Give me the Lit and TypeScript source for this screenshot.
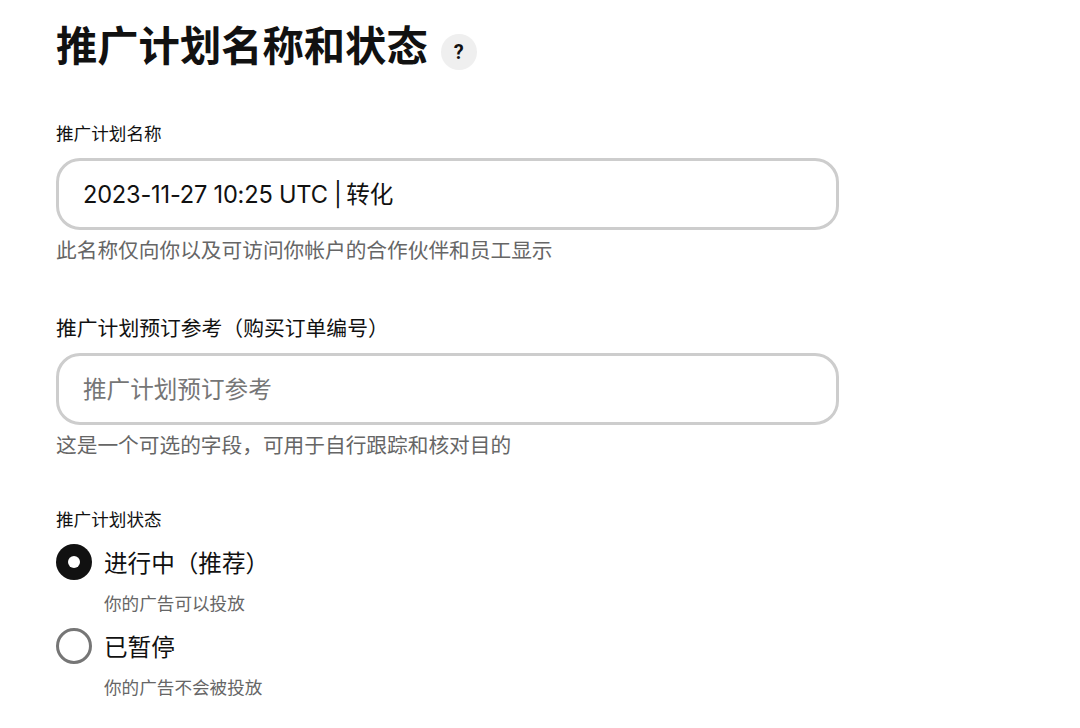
import { LitElement, html, css } from "lit";
import { customElement } from "lit/decorators.js";

@customElement("app-root")
export class AppRoot extends LitElement {
  static styles = css`
    :host { display: block; width: 1080px; height: 728px; overflow: hidden; background: #fff; color: #111;
      font-family: "Roboto", "Noto Sans CJK SC", sans-serif; }
    .page { display: flex; flex-direction: column; padding: 22px 0 0 56px; width: 783px; }
    .head { display: flex; align-items: center; gap: 13px; height: 50px; margin-bottom: 50px; }
    h1 { margin: 0; font-size: 41.3px; line-height: 50px; font-weight: 700; }
    .help { width: 36px; height: 36px; border-radius: 50%; background: #efefef; display: flex; align-items: center; justify-content: center; font-size: 20px; font-weight: 700; margin-top: 9px; }
    .label { font-size: 17.6px; line-height: 24px; height: 24px; }
    .label.big { font-size: 20.8px; }
    .input { box-sizing: border-box; height: 72px; border: 3px solid #cdcdcd; border-radius: 24px; display: flex; align-items: center; padding: 0 24px 3px; font-size: 23.6px; margin-top: 12px; }
    .latin { font-family: "Inter", "Noto Sans CJK SC", sans-serif; letter-spacing: -0.2px; white-space: pre; }
    .cjk { letter-spacing: 0; margin-left: -2px; }
    .ph { color: #767676; }
    .hint { font-size: 20.7px; line-height: 28px; color: #666; margin-top: 7px; }
    .f2 { margin-top: 52px; }
    .f3 { margin-top: 48px; }
    .radio { display: flex; align-items: center; gap: 12px; height: 36px; font-size: 23.6px; margin-top: 12px; }
    .dot { box-sizing: border-box; width: 36px; height: 36px; border-radius: 50%; flex: none; }
    .on { background: #111; display: flex; align-items: center; justify-content: center; }
    .on::after { content: ""; width: 12px; height: 12px; border-radius: 50%; background: #fff; }
    .off { border: 3px solid #767676; }
    .sub { font-size: 17.6px; line-height: 24px; color: #666; margin: 12px 0 0 48px; }
  `;
  render() {
    return html`<div class="page">
      <div class="head"><h1>推广计划名称和状态</h1><div class="help">?</div></div>
      <div class="label">推广计划名称</div>
      <div class="input"><span class="latin">2023-11-27 10:25 UTC | <span class="cjk">转化</span></span></div>
      <div class="hint">此名称仅向你以及可访问你帐户的合作伙伴和员工显示</div>
      <div class="label big f2">推广计划预订参考（购买订单编号）</div>
      <div class="input ph">推广计划预订参考</div>
      <div class="hint">这是一个可选的字段，可用于自行跟踪和核对目的</div>
      <div class="label f3">推广计划状态</div>
      <div class="radio"><span class="dot on"></span>进行中（推荐）</div>
      <div class="sub">你的广告可以投放</div>
      <div class="radio"><span class="dot off"></span>已暂停</div>
      <div class="sub">你的广告不会被投放</div>
    </div>`;
  }
}
